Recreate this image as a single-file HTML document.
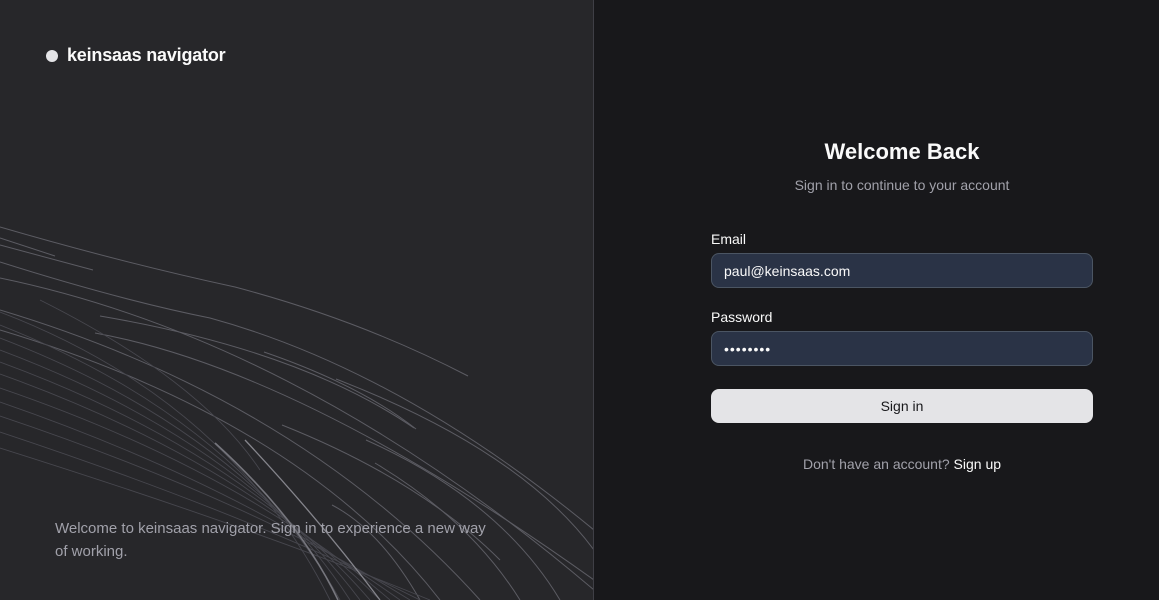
<!DOCTYPE html>
<html><head><style>
*{margin:0;padding:0;box-sizing:border-box}
body{width:1159px;height:600px;overflow:hidden;font-family:"Liberation Sans",sans-serif;background:#18181b;position:relative}
.left{position:absolute;left:0;top:0;width:594px;height:600px;background:#27272a;border-right:1px solid #3f3f46;overflow:hidden}
.logo{position:absolute;left:46px;top:45px;color:#fafafa;font-size:18px;font-weight:bold;display:flex;align-items:center;gap:9px;letter-spacing:-0.2px}
.logo i{width:12px;height:12px;border-radius:50%;background:#e4e4e7;display:block}
.quote{position:absolute;left:55px;top:517px;width:440px;color:#a1a1aa;font-size:15px;line-height:23px}
svg{position:absolute;left:0;top:0}
.right{position:absolute;left:711px;top:0;width:382px}
h1{position:absolute;top:139px;width:382px;text-align:center;color:#fafafa;font-size:22px;font-weight:bold}
.sub{position:absolute;top:177px;width:382px;text-align:center;color:#a1a1aa;font-size:14px}
label{position:absolute;left:0;color:#fafafa;font-size:14px}
.in{position:absolute;left:0;width:382px;height:35px;border:1px solid #4b5563;border-radius:8px;background:#2a3346;color:#fafafa;font-size:14px;padding:0 12px;line-height:34px}
.btn{position:absolute;left:0;top:389px;width:382px;height:34px;border-radius:8px;background:#e4e4e7;color:#18181b;text-align:center;line-height:34px;font-size:14px}
.su{position:absolute;top:456px;width:382px;text-align:center;color:#a1a1aa;font-size:14px}
.su b{color:#fafafa;font-weight:normal}
</style></head><body>
<div class="left">
<svg width="594" height="600" fill="none">
<g stroke="#5c5c63" stroke-width="1">
<path d="M0 227 Q120 262 235 287 Q360 320 468 376"/>
<path d="M0 238 L55 256"/>
<path d="M0 245 L93 270"/>
<path d="M0 262 Q120 300 210 318 Q400 370 594 530"/>
<path d="M100 316 Q300 350 414 428"/>
<path d="M95 333 Q300 370 594 580"/>
<path d="M264 352 Q360 385 416 429"/>
<path d="M0 278 Q300 340 594 590"/>
<path d="M336 379 Q520 450 594 550"/>
<path d="M282 425 Q420 480 500 560"/>
<path d="M366 440 Q500 500 560 600"/>
<path d="M375 463 Q470 520 520 600"/>
<path d="M0 310 Q300 400 480 600"/>
<path d="M0 330 Q300 420 440 600"/>
<path d="M332 505 Q380 530 420 600"/>
</g>
<g stroke="#47474e" stroke-width="0.9">
<path d="M0 312 Q230 400 330 600"/>
<path d="M0 325 Q240 420 340 600"/>
<path d="M0 338 Q240 430 350 600"/>
<path d="M0 350 Q240 440 360 600"/>
<path d="M0 362 Q240 450 370 600"/>
<path d="M0 374 Q240 460 380 600"/>
<path d="M0 388 Q240 470 390 600"/>
<path d="M0 402 Q240 485 400 600"/>
<path d="M0 416 Q250 500 410 600"/>
<path d="M0 432 Q250 515 420 600"/>
<path d="M0 448 Q260 530 430 600"/>
<path d="M40 300 Q200 380 260 470"/>
</g>
<path d="M215 443 Q300 520 338 600" stroke="#76767d" stroke-width="1.6"/>
<path d="M245 440 Q320 520 380 600" stroke="#85858c" stroke-width="1.3"/>
</svg>
<div class="logo"><i></i>keinsaas navigator</div>
<div class="quote">Welcome to keinsaas navigator. Sign in to experience a new way of working.</div>
</div>
<div class="right">
<h1>Welcome Back</h1>
<div class="sub">Sign in to continue to your account</div>
<label style="top:231px">Email</label>
<div class="in" style="top:253px">paul@keinsaas.com</div>
<label style="top:309px">Password</label>
<div class="in" style="top:331px;letter-spacing:1px">••••••••</div>
<div class="btn">Sign in</div>
<div class="su">Don't have an account? <b>Sign up</b></div>
</div>
</body></html>
